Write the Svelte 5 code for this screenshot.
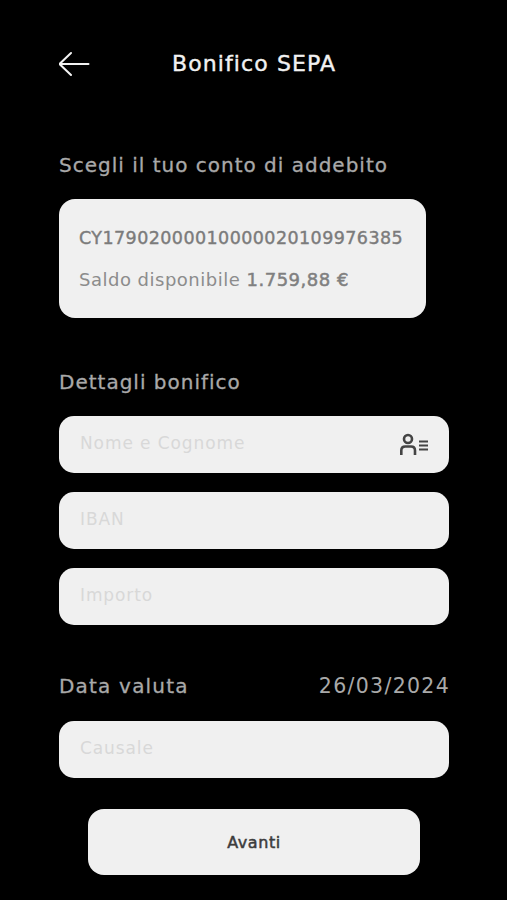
<script>
  const fields = ['IBAN', 'Importo'];
</script>

<div class="screen">
  <header class="top">
    <svg class="back" width="32" height="26" viewBox="0 0 32 26" fill="none" stroke="#f2f2f2" stroke-width="2" stroke-linecap="round" stroke-linejoin="round">
      <path d="M0.5 13H29.5M12 2L0.5 13L12 24" />
    </svg>
    <h1>Bonifico SEPA</h1>
  </header>

  <h2 class="first">Scegli il tuo conto di addebito</h2>
  <section class="account">
    <div class="iban">CY17902000010000020109976385</div>
    <div class="saldo">Saldo disponibile <b>1.759,88 €</b></div>
  </section>

  <h2 class="second">Dettagli bonifico</h2>
  <div class="fields">
    <div class="field">
      <span>Nome e Cognome</span>
      <svg class="contact" width="30" height="24" viewBox="0 0 30 24" fill="none" stroke="#444" stroke-width="2.6">
        <circle cx="9" cy="6" r="4" />
        <path d="M2.3 22V17.5Q2.3 13.5 6.3 13.5H12Q16 13.5 16 17.5V22" />
        <path d="M20 8.5H29M20 12.5H29M20 16.5H29" stroke-width="2" />
      </svg>
    </div>
    {#each fields as f}
      <div class="field"><span>{f}</span></div>
    {/each}
  </div>

  <div class="valuta">
    <h2>Data valuta</h2>
    <span>26/03/2024</span>
  </div>

  <div class="field"><span>Causale</span></div>

  <button>Avanti</button>
</div>

<style>
  :global(body) {
    margin: 0;
    background: #000;
  }
  .screen {
    width: 507px;
    height: 900px;
    box-sizing: border-box;
    padding: 0 58px 0 59px;
    background: #000;
    font-family: "DejaVu Sans", sans-serif;
    overflow: hidden;
  }
  .top {
    display: flex;
    align-items: center;
    height: 26px;
    padding-top: 51px;
  }
  .back {
    flex: none;
  }
  h1 {
    margin: 0 0 2px 81px;
    font-size: 22px;
    font-weight: 400;
    letter-spacing: 1.1px;
    -webkit-text-stroke: 0.4px #f1f1f1;
    color: #f1f1f1;
    white-space: nowrap;
  }
  h2 {
    margin: 0;
    font-size: 20px;
    line-height: 24px;
    font-weight: 400;
    letter-spacing: 1px;
    -webkit-text-stroke: 0.3px #a9a9a9;
    color: #a9a9a9;
  }
  .first {
    margin-top: 76px;
  }
  .second {
    margin-top: 52px;
  }
  .account {
    box-sizing: border-box;
    width: 367px;
    height: 119px;
    margin-top: 22px;
    padding: 28px 20px 0;
    background: #f0f0f0;
    border-radius: 16px;
  }
  .iban {
    font-size: 17.5px;
    line-height: 22px;
    letter-spacing: 0.43px;
    color: #7b7b7b;
    -webkit-text-stroke: 0.4px #7b7b7b;
    white-space: nowrap;
  }
  .saldo {
    margin-top: 20px;
    font-size: 18px;
    line-height: 22px;
    letter-spacing: 0.5px;
    color: #8c8c8c;
    white-space: nowrap;
  }
  .saldo b {
    font-weight: 400;
    -webkit-text-stroke: 0.5px #808080;
    color: #808080;
  }
  .fields {
    display: flex;
    flex-direction: column;
    gap: 19px;
    margin-top: 22px;
  }
  .field {
    box-sizing: border-box;
    height: 57px;
    padding: 0 20px 4px 21px;
    display: flex;
    align-items: center;
    justify-content: space-between;
    background: #f0f0f0;
    border-radius: 15px;
    font-size: 17px;
    letter-spacing: 0.9px;
    color: #d8d8d8;
  }
  .contact {
    margin: 5px 0 0 0;
  }
  .valuta {
    display: flex;
    justify-content: space-between;
    align-items: center;
    margin: 49px -1px 23px 0;
    height: 24px;
  }
  .valuta h2 {
    letter-spacing: 1.2px;
  }
  .valuta span {
    font-size: 20.5px;
    letter-spacing: 1.3px;
    color: #a9a9a9;
  }
  button {
    display: block;
    width: 332px;
    height: 66px;
    margin: 31px 0 0 29px;
    border: 0;
    padding: 0;
    background: #f0f0f0;
    border-radius: 16px;
    font: 400 16px "DejaVu Sans", sans-serif;
    letter-spacing: 0.6px;
    -webkit-text-stroke: 0.5px #3c3c3c;
    color: #3c3c3c;
  }
</style>
